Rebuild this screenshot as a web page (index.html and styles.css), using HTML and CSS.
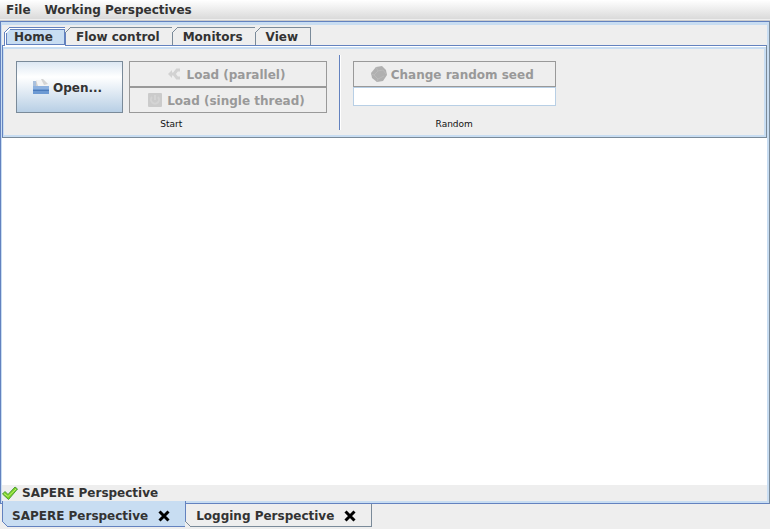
FILE: index.html
```html
<!DOCTYPE html>
<html lang="en">
<head>
<meta charset="utf-8">
<title>SAPERE Perspective</title>
<link rel="stylesheet" href="styles.css">
</head>
<body>
<nav class="menubar">
  <button type="button">File</button>
  <button type="button">Working Perspectives</button>
</nav>
<main class="frame">
  <nav class="tabs">
    <button type="button" class="tab selected">Home</button>
    <button type="button" class="tab">Flow control</button>
    <button type="button" class="tab">Monitors</button>
    <button type="button" class="tab">View</button>
  </nav>
  <section class="ribbon">
    <div class="group">
      <div class="start">
        <button type="button" class="open">
          <svg width="16" height="16" viewBox="0 0 16 16" aria-hidden="true">
            <path d="M0 2h6v6H0z" fill="#a9c0dd"/>
            <path d="M3 1h8l4 4v5H3z" fill="#f4f4f4"/>
            <path d="M8 0h2l5 5-4 1z" fill="#d4d4d4"/>
            <path d="M3 1v6h2z" fill="#cfcfcf"/>
            <path d="M0 7h16v8H0z" fill="#6d9ad3"/>
            <path d="M0 7h16v3H0z" fill="#8db1df"/>
            <path d="M0 11h16v1H0z" fill="#4a7abb"/>
          </svg>
          <span>Open...</span>
        </button>
        <div class="stack">
          <button type="button" disabled>
            <svg width="16" height="16" viewBox="0 0 16 16" aria-hidden="true">
              <path d="M5 8h3l3-4h3M8 8l3 4h3" fill="none" stroke="#d2d2d2" stroke-width="3"/>
              <path d="M6 4v8L2 8z" fill="#d2d2d2"/>
            </svg>
            <span>Load (parallel)</span>
          </button>
          <button type="button" disabled>
            <svg width="16" height="16" viewBox="0 0 16 16" aria-hidden="true">
              <rect x="1" y="1" width="14" height="14" rx="1" fill="#cbcbcb"/>
              <path d="M5 5a4 4 0 1 0 6 0M8 3v5" fill="none" stroke="#d4d4d4" stroke-width="2"/>
            </svg>
            <span>Load (single thread)</span>
          </button>
        </div>
      </div>
      <h2>Start</h2>
    </div>
    <div class="group">
      <div class="stack">
        <button type="button" disabled>
          <svg width="16" height="16" viewBox="0 0 16 16" aria-hidden="true">
            <path d="M5 1l6-1 4 4 1 5-4 6-6 1-5-4-1-5z" fill="#b0b0b0"/>
            <path d="M5 1l2 4 5-1 3 4M7 5l-4 4 4 4 6-3M3 9l-3-1M7 13l-1 3" fill="none" stroke="#bababa"/>
          </svg>
          <span>Change random seed</span>
        </button>
        <input type="text" aria-label="Random seed">
      </div>
      <h2>Random</h2>
    </div>
  </section>
  <section class="workspace"></section>
  <footer class="status">
    <svg width="16" height="16" viewBox="0 0 16 16" aria-hidden="true">
      <path d="M.5 9L3 6.500l3 3L13 2l2.500 2L6.500 14.500z" fill="#7ed321" stroke="#4b9a3c"/>
      <path d="M2 8.500l4 3L14 4" fill="none" stroke="#b7ef74"/>
    </svg>
    <span>SAPERE Perspective</span>
  </footer>
</main>
<nav class="views">
  <div class="view selected">
    <button type="button">SAPERE Perspective</button>
    <button type="button" class="close" aria-label="Close SAPERE Perspective"><svg width="12" height="12" viewBox="0 0 12 12" aria-hidden="true"><path d="M1.500 1.500l9 9M10.500 1.500l-9 9" stroke="#000" stroke-width="3"/></svg></button>
  </div>
  <div class="view">
    <button type="button">Logging Perspective</button>
    <button type="button" class="close" aria-label="Close Logging Perspective"><svg width="12" height="12" viewBox="0 0 12 12" aria-hidden="true"><path d="M1.500 1.500l9 9M10.500 1.500l-9 9" stroke="#000" stroke-width="3"/></svg></button>
  </div>
</nav>
</body>
</html>
```
FILE: styles.css
```css
:root {
  --blue: #6382bf;
  --pale: #c8ddf2;
  --slate: #7a8a99;
  --face: #eeeeee;
}
* { box-sizing: border-box; }
body {
  margin: 0;
  height: 100vh;
  display: flex;
  flex-direction: column;
  overflow: hidden;
  background: var(--face);
  color: #333333;
  font: bold 12px/16px "DejaVu Sans", sans-serif;
}
button {
  margin: 0;
  padding: 0;
  border: 0;
  background: none;
  color: inherit;
  font: inherit;
  white-space: nowrap;
}
svg { display: block; flex: none; }

.menubar {
  flex: none;
  display: flex;
  gap: 14px;
  height: 21px;
  padding: 0 6px 2px;
  background: linear-gradient(#ffffff, #dadada 19px, #eeeeee 19px, #eeeeee 20px, #cccccc 20px);
}

.frame {
  flex: 1;
  display: flex;
  flex-direction: column;
  border: 1px solid var(--blue);
  border-right-color: var(--slate);
  box-shadow: inset 1px 0 var(--pale), inset -2px -2px var(--pale);
  padding: 0 2px 2px 1px;
}
.tabs {
  display: flex;
  padding: 2px 0 0 2px;
  border-top: 3px solid var(--pale);
}
.tab {
  position: relative;
  height: 18px;
  padding: 0 12px 0 10px;
  border: 1px solid var(--slate);
  border-width: 1px 1px 0 0;
}
.tab::before {
  content: "";
  position: absolute;
  left: -1px;
  top: -1px;
  width: 6px;
  height: 6px;
  background: linear-gradient(135deg, var(--face) 46%, var(--slate) 46%, var(--slate) 56%, transparent 56%);
}
.tab.selected {
  height: 19px;
  padding: 0 12px 1px 9px;
  margin-bottom: -1px;
  border: 1px solid var(--blue);
  border-bottom: 0;
  background: var(--pale);
  box-shadow: inset 0 1px white, inset 0 2px var(--blue), inset 1px -1px white, inset 2px -2px var(--blue), inset -1px 0 var(--blue);
}
.tab.selected::before {
  background: linear-gradient(135deg, var(--face) 42%, var(--blue) 42%, var(--blue) 55%, white 55%, white 67%, transparent 67%);
}

.ribbon {
  display: flex;
  height: 93px;
  padding: 6px 0 0 13px;
  border: 1px solid var(--blue);
  border-right-color: var(--slate);
  border-bottom-color: var(--slate);
  box-shadow: inset 0 1px white, inset 0 3px var(--pale), inset 1px 0 var(--pale), inset -2px -2px var(--pale);
}
.group {
  display: flex;
  flex-direction: column;
  justify-content: space-between;
  height: 78px;
  padding-top: 9px;
}
.group + .group {
  height: 75px;
  margin: 3px 0 0 12px;
  padding: 6px 0 0 13px;
  border-left: 1px solid var(--blue);
  box-shadow: inset 1px 0 white;
}
.group h2 {
  margin: 0;
  color: #111111;
  font: 9px/12px "DejaVu Sans", sans-serif;
  text-align: center;
}
.start { display: flex; gap: 6px; }
.stack { display: flex; flex-direction: column; }
.open, .stack button {
  display: flex;
  align-items: center;
  justify-content: center;
  gap: 4px;
  border: 1px solid var(--slate);
}
.open span, .stack span { padding-top: 2px; }
.open {
  height: 52px;
  padding: 0 20px 0 16px;
  background: linear-gradient(#dde8f3, #ffffff 30%, #b8cfe5);
}
.stack button {
  height: 26px;
  padding: 0 21px 0 17px;
  border-color: #999999;
  color: #999999;
}
.stack input {
  width: 100%;
  height: 19px;
  border: 1px solid #b8cfe5;
  background: white;
}

.workspace { flex: 1; background: white; }
.status {
  display: flex;
  align-items: center;
  gap: 4px;
  height: 16px;
}

.views { flex: none; display: flex; height: 25px; padding-left: 1px; }
.view {
  position: relative;
  display: flex;
  align-items: center;
  gap: 10px;
  height: 23px;
  padding: 1px 15px 0 10px;
  border: 1px solid var(--slate);
  border-width: 0 1px 1px 0;
}
.view.selected {
  margin: -3px 0 0 1px;
  height: 26px;
  padding: 4px 15px 0 9px;
  border: 1px solid var(--blue);
  border-top: 0;
  background: var(--pale);
}
.view::after {
  content: "";
  position: absolute;
  left: -1px;
  bottom: -1px;
  width: 6px;
  height: 6px;
  background: linear-gradient(45deg, var(--face) 46%, var(--slate) 46%, var(--slate) 56%, transparent 56%);
}
.view.selected::after {
  background: linear-gradient(45deg, var(--face) 46%, var(--blue) 46%, var(--blue) 56%, transparent 56%);
}
```
